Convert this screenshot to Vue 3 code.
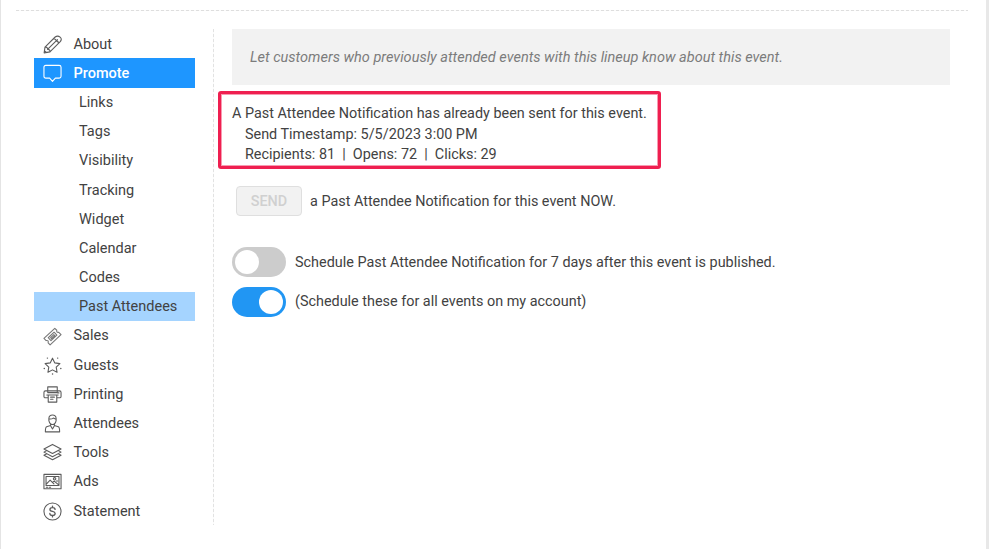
<script setup>
import { ref } from 'vue'

const menu = [
    { label: 'About', icon: 'pencil' },
    { label: 'Promote', icon: 'bubble', active: true },
    { label: 'Links', sub: true },
    { label: 'Tags', sub: true },
    { label: 'Visibility', sub: true },
    { label: 'Tracking', sub: true },
    { label: 'Widget', sub: true },
    { label: 'Calendar', sub: true },
    { label: 'Codes', sub: true },
    { label: 'Past Attendees', sub: true, current: true },
    { label: 'Sales', icon: 'ticket' },
    { label: 'Guests', icon: 'star' },
    { label: 'Printing', icon: 'printer' },
    { label: 'Attendees', icon: 'person' },
    { label: 'Tools', icon: 'layers' },
    { label: 'Ads', icon: 'picture' },
    { label: 'Statement', icon: 'dollar' }
]

const scheduleEvent = ref(false)
const scheduleAll = ref(true)
</script>

<template>
    <div class="page">
        <div class="divider"></div>
        <div class="columns">
            <ul class="menu">
                <li v-for="item in menu" :key="item.label" class="menu-item" :class="{ sub: item.sub, active: item.active, current: item.current }">
                    <svg v-if="item.icon" class="icon" :class="item.icon" viewBox="0 0 20 20">
                        <template v-if="item.icon === 'pencil'">
                            <path d="M1.2 18.8 2.1 12.8 12.8 2.1Q15.5 .2 18 2.3T17.9 7.3L7.3 17.8ZM2.1 12.8Q4.8 12.3 4.8 15.1Q7.5 15 7.3 17.8M4.8 15.1 15.2 4.8M10.9 4Q13.6 3.8 14 6.2Q16.2 6.3 16.2 9M1.5 16.5 3.6 18.5" />
                        </template>
                        <template v-else-if="item.icon === 'bubble'">
                            <path d="M3 1.4H17Q19 1.4 19 3.4V12.9Q19 14.9 17 14.9H13L10 18.3 7 14.9H3Q1 14.9 1 12.9V3.4Q1 1.4 3 1.4Z" />
                        </template>
                        <template v-else-if="item.icon === 'ticket'">
                            <path d="M1 12 12.4 1.4 14.5 3.4Q13.8 6 16.6 5.6L19 8 7.5 18.8 5.4 16.6Q6.2 13.8 3.3 14.3ZM5.5 11.3 11.7 5.5 14.6 8.5 8.4 14.4ZM8 11.2 11.4 8.1 12.4 9.1 9 12.3Z" />
                        </template>
                        <template v-else-if="item.icon === 'star'">
                            <path d="M10 2.3 12.3 7.2 17.8 8 13.9 11.8 14.8 17.1 10 14.6 5.2 17.1 6.1 11.8 2.2 8 7.7 7.2Z" />
                            <path class="dots" d="M4.6 2.2h.1M15.4 2.2h.1M1.3 13.2h.1M18.7 13.2h.1M10 19h.1" />
                        </template>
                        <template v-else-if="item.icon === 'printer'">
                            <path d="M5 6.2V2H15V6.2M5 13.5H2.5Q1 13.5 1 12V7.8Q1 6.2 2.6 6.2H17.4Q19 6.2 19 7.8V12Q19 13.5 17.5 13.5H15M4 10.5H16M5.5 10.5V18H14.5V10.5M8 12.8H12M8 15H10.5M15.5 8.3H16.8M5 6.2V8H15V6.2" />
                        </template>
                        <template v-else-if="item.icon === 'person'">
                            <path d="M6.2 4.4Q6.5 1 10 1T13.8 4.4V7Q13 11 10 11T6.2 7ZM6.3 5.2Q9 5.7 10.8 4.3L13.7 5.6M8 10.4V12.2L3.8 13.5Q2.5 14 2.5 18.8H17.5Q17.5 14 16.2 13.5L12 12.2V10.4M8 12.3 10 15.8 12 12.3" />
                        </template>
                        <template v-else-if="item.icon === 'layers'">
                            <path d="M10 1.5 19 6.3 10 11.1 1 6.3ZM3.8 8 1 9.6 10 14.4 19 9.6 16.2 8M3.8 11.3 1 12.9 10 17.7 19 12.9 16.2 11.3" />
                        </template>
                        <template v-else-if="item.icon === 'picture'">
                            <path d="M1 2.5H19V17.7H1ZM3.2 4.7H16.8V14.2H3.2ZM3.2 13 7.5 8.5 11.5 12.5M9.8 11 11.8 9.6 16.8 13.8M3.5 16H5M6.7 16H8" />
                            <circle cx="12.2" cy="7.2" r="1.3" />
                            <path d="M14 9.5H15.5" />
                        </template>
                        <template v-else>
                            <circle cx="10" cy="10" r="9" />
                            <path class="sign" d="M12.7 7.8Q12.5 5.9 10 5.9T7.3 7.8Q7.3 9.4 10 9.9T12.8 12.1Q12.8 14.1 10 14.1T7.2 12.1M10 4.3V5.9M10 14.1V15.7" />
                        </template>
                    </svg>
                    <span class="label">{{ item.label }}</span>
                </li>
            </ul>

            <div class="content">
                <div class="hint">Let customers who previously attended events with this lineup know about this event.</div>

                <div class="notice">
                    <div>A Past Attendee Notification has already been sent for this event.</div>
                    <div class="indent">Send Timestamp: 5/5/2023 3:00 PM</div>
                    <div class="indent">Recipients: 81 &nbsp;|&nbsp; Opens: 72 &nbsp;|&nbsp; Clicks: 29</div>
                </div>

                <div class="send-row">
                    <button class="send" disabled>SEND</button>
                    <span>a Past Attendee Notification for this event NOW.</span>
                </div>

                <label class="toggle-row">
                    <input type="checkbox" v-model="scheduleEvent">
                    <span class="switch"></span>
                    <span>Schedule Past Attendee Notification for 7 days after this event is published.</span>
                </label>
                <label class="toggle-row">
                    <input type="checkbox" v-model="scheduleAll">
                    <span class="switch"></span>
                    <span class="all-events">(Schedule these for all events on my account)</span>
                </label>
            </div>
        </div>
    </div>
</template>

<style>
body {
    background: #fff;
}
</style>

<style scoped>
.page {
    box-sizing: border-box;
    height: 549px;
    padding: 10px 18px 0 15px;
    border-left: 1px solid #e4e4e4;
    border-right: 3px solid #e8e8e8;
    overflow: hidden;
    font-family: Roboto, "Liberation Sans", sans-serif;
    font-size: 14.5px;
    color: #424242;
}

.divider {
    height: 1px;
    background: repeating-linear-gradient(90deg, #dedede 0 3px, #fafafa 3px 5px);
}

.columns {
    display: flex;
    margin-top: 18px;
    padding-left: 18px;
}

.menu {
    box-sizing: border-box;
    width: 180px;
    height: 496px;
    margin: 0;
    padding: 0 19px 0 0;
    list-style: none;
    background: repeating-linear-gradient(180deg, #e2e2e2 0 3px, #fafafa 3px 5px) right top / 1px 100% no-repeat;
}

.menu-item {
    display: flex;
    align-items: center;
    height: 29.19px;
    padding-left: 8.5px;
    cursor: pointer;
}

.menu-item.sub {
    padding-left: 45px;
}

.menu-item.active {
    background: #1e96ff;
    box-shadow: 0 1px 0 #1e96ff;
    color: #fff;
    font-weight: 500;
}

.menu-item.current {
    background: #a5d4ff;
}

.label {
    padding-top: 1px;
}

.icon {
    width: 19px;
    height: 19px;
    margin-right: 12px;
    padding-top: 1px;
    fill: none;
    stroke: #5c5c5c;
    stroke-width: 1.15;
    stroke-linejoin: round;
    stroke-linecap: round;
}

.icon.bubble {
    stroke: #fff;
}

.icon.ticket {
    padding-top: 3px;
    stroke: #777;
}

.dots {
    stroke-width: 1.5;
}

.sign {
    stroke-width: 1.4;
}

.content {
    margin-left: 18px;
    width: 718px;
    font-size: 14.4px;
}

.hint {
    height: 56px;
    line-height: 57px;
    padding-left: 18px;
    background: #f2f2f2;
    color: #7c7c7c;
    font-size: 14.53px;
    font-style: italic;
    white-space: nowrap;
}

.notice {
    box-sizing: border-box;
    width: 443px;
    height: 78px;
    margin: 6px 0 0 -14px;
    padding: 10px 0 0 11px;
    border: 3px solid #ef1f50;
    border-radius: 3px;
    box-shadow: inset 0 0 0 1px rgba(239, 31, 80, 0.45);
    line-height: 20.5px;
    white-space: nowrap;
}

.indent {
    padding-left: 13px;
}

.send-row {
    display: flex;
    align-items: center;
    margin: 17px 0 31px 4px;
}

.send {
    box-sizing: border-box;
    width: 66px;
    height: 30px;
    margin-right: 8px;
    padding: 0;
    border: 1px solid #dfdfdf;
    border-radius: 4px;
    background: #f2f2f2;
    color: #d0d0d0;
    font: 500 14.4px Roboto, sans-serif;
}

.toggle-row {
    display: flex;
    align-items: center;
    height: 30px;
    margin-bottom: 10px;
    cursor: pointer;
}

.toggle-row input {
    display: none;
}

.all-events {
    padding-bottom: 2px;
}

.switch {
    box-sizing: border-box;
    width: 54px;
    height: 30px;
    margin-right: 9px;
    padding: 3px;
    border-radius: 15px;
    background: #ccc;
}

.switch::before {
    content: "";
    display: block;
    width: 24px;
    height: 24px;
    border-radius: 50%;
    background: #fff;
}

input:checked + .switch {
    background: #2196f3;
}

input:checked + .switch::before {
    margin-left: 24px;
}
</style>
